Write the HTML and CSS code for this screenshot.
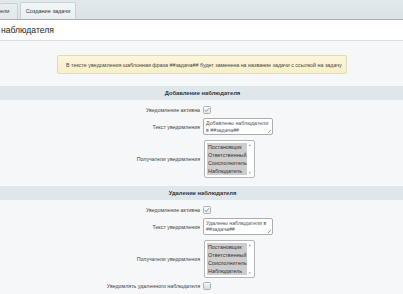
FILE: index.html
```html
<!DOCTYPE html>
<html>
<head>
<meta charset="utf-8">
<link rel="stylesheet" href="styles.css">
</head>
<body>
<div class="tabs">
  <div class="tab tab-active">ели</div>
  <div class="tab tab-second">Создание задачи</div>
</div>
<div class="title">наблюдателя</div>
<div class="content">
  <div class="note-wrap">
    <div class="note">В тексте уведомления шаблонная фраза ##задача## будет заменена на название задачи с ссылкой на задачу</div>
  </div>

  <div class="section-head">Добавление наблюдателя</div>
  <div class="form">
    <div class="label">Уведомление активна</div>
    <div class="ctrl"><span class="cb cb-on"><svg viewBox="0 0 8 8" width="6" height="6"><path d="M1.2 4.2 L3.1 6 L6.8 1.6" fill="none" stroke="#6a7f8f" stroke-width="1.1"/></svg></span></div>
    <div class="label">Текст уведомления</div>
    <div class="ctrl"><div class="ta">Добавлены наблюдатели в ##задача##<span class="grip"></span></div></div>
    <div class="label">Получатели уведомления</div>
    <div class="ctrl">
      <div class="sel">
        <div class="opts">
          <div class="opt">Постановщик</div>
          <div class="opt">Ответственный</div>
          <div class="opt">Соисполнитель</div>
          <div class="opt">Наблюдатель</div>
        </div>
        <div class="sb"><span>▲</span><span>▼</span></div>
      </div>
    </div>
  </div>

  <div class="section-head">Удаление наблюдателя</div>
  <div class="form">
    <div class="label">Уведомление активна</div>
    <div class="ctrl"><span class="cb cb-on"><svg viewBox="0 0 8 8" width="6" height="6"><path d="M1.2 4.2 L3.1 6 L6.8 1.6" fill="none" stroke="#6a7f8f" stroke-width="1.1"/></svg></span></div>
    <div class="label">Текст уведомления</div>
    <div class="ctrl"><div class="ta">Удалены наблюдатели в ##задача##<span class="grip"></span></div></div>
    <div class="label">Получатели уведомления</div>
    <div class="ctrl">
      <div class="sel">
        <div class="opts">
          <div class="opt">Постановщик</div>
          <div class="opt">Ответственный</div>
          <div class="opt">Соисполнитель</div>
          <div class="opt">Наблюдатель</div>
        </div>
        <div class="sb"><span>▲</span><span>▼</span></div>
      </div>
    </div>
    <div class="label">Уведомлять удаленного наблюдателя</div>
    <div class="ctrl"><span class="cb"></span></div>
  </div>
</div>
</body>
</html>
```
FILE: styles.css
```css
html, body {
  margin: 0;
  padding: 0;
  background: #f5f7f8;
  font-family: "Liberation Sans", Arial, sans-serif;
  color: #333;
  overflow: hidden;
}
.tabs {
  height: 19px;
  background: linear-gradient(#e2e9ec, #dbe3e6);
  border-bottom: 1px solid #a9aeb3;
  display: flex;
  align-items: flex-end;
  gap: 2px;
}
.tab {
  height: 16px;
  box-sizing: border-box;
  font-size: 5.6px;
  line-height: 15px;
  color: #333;
  padding: 0 6px;
  white-space: nowrap;
  background: linear-gradient(#f3f6f7, #eaeef0);
  border: 1px solid #c9d0d4;
  border-bottom: none;
  border-radius: 2px 2px 0 0;
}
.tab-active {
  padding: 0 4px 0 0;
  border-left: none;
  width: 18px;
  overflow: hidden;
  background: linear-gradient(#e9eef0, #e2e8ea);
}
.tab-second {
  width: 56px;
  height: 17px;
  padding: 0 4px;
  text-align: center;
  line-height: 16px;
}
.title {
  height: 20px;
  background: #fff;
  border-bottom: 1px solid #d9dee1;
  font-size: 8.6px;
  line-height: 21px;
  color: #222;
  padding-left: 1px;
}
.content {
  background: #f5f7f8;
}
.note-wrap {
  padding: 14px 0 12px 57px;
}
.note {
  width: 290px;
  height: 19px;
  box-sizing: border-box;
  background: linear-gradient(#fbf6dc, #f7efca);
  border: 1px solid #e3dbab;
  border-radius: 2px;
  font-size: 5.35px;
  line-height: 18px;
  padding-left: 8px;
  color: #444;
  white-space: nowrap;
}
.section-head {
  height: 14px;
  background: #e0e7ea;
  text-align: center;
  font-weight: bold;
  font-size: 5.8px;
  line-height: 14px;
  color: #333;
  padding-left: 2px;
}
.form {
  display: grid;
  grid-template-columns: 200px 1fr;
  column-gap: 3px;
  row-gap: 4.4px;
  align-items: center;
  padding: 6px 0 8px;
}
.label {
  text-align: right;
  font-size: 5.3px;
  color: #444;
  white-space: nowrap;
}
.ctrl {
  display: flex;
  align-items: center;
}
.cb {
  width: 8px;
  height: 8px;
  box-sizing: border-box;
  border: 1px solid #aab0b4;
  border-radius: 1.5px;
  background: linear-gradient(#f4f6f7, #d7dcdf);
  display: flex;
  align-items: center;
  justify-content: center;
}
.cb-on {
  background: linear-gradient(#fbfcfc, #e5e9eb);
}
.ta {
  position: relative;
  width: 70px;
  height: 17px;
  box-sizing: border-box;
  background: #fff;
  border: 1px solid #a8aeb2;
  border-radius: 2px;
  font-size: 5.3px;
  line-height: 6.3px;
  padding: 1px 2px;
  color: #555;
}
.grip {
  position: absolute;
  right: 1px;
  bottom: 1px;
  width: 3px;
  height: 3px;
  background: linear-gradient(135deg, transparent 45%, #999 45%, #999 60%, transparent 60%);
}
.sel {
  margin-left: 1px;
  width: 51px;
  height: 38px;
  box-sizing: border-box;
  background: #fff;
  border: 1px solid #b2b7ba;
  border-radius: 2px;
  display: flex;
  padding: 2px 1px 2px 2px;
}
.opts {
  flex: 1;
  display: flex;
  flex-direction: column;
}
.opt {
  height: 8.5px;
  background: #cdcdcd;
  font-size: 5.4px;
  line-height: 8.5px;
  padding-left: 1px;
  color: #333;
  white-space: nowrap;
  overflow: hidden;
}
.sb {
  width: 7px;
  display: flex;
  flex-direction: column;
  justify-content: space-between;
  align-items: center;
  font-size: 3px;
  color: #888;
}
```
